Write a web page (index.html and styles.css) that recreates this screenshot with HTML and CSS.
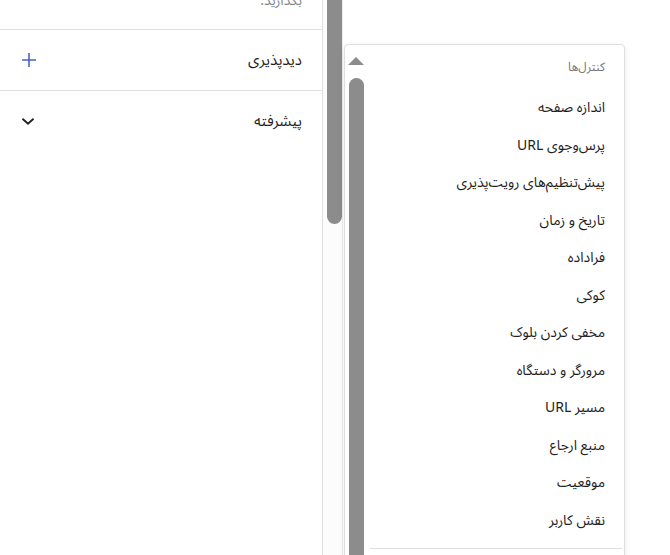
FILE: index.html
```html
<!DOCTYPE html>
<html lang="fa">
<head>
<meta charset="utf-8">
<title>Settings</title>
<link rel="stylesheet" href="styles.css">
</head>
<body>
<div class="page">
  <aside class="panel">
    <div class="intro"><p class="intro-text">بگذارید.</p></div>
    <div class="row">
      <span class="row-title">دیدپذیری</span>
      <svg class="icon" width="16" height="16" viewBox="0 0 16 16"><path d="M8 1v14M1 8h14" stroke="#4563c9" stroke-width="1.6" fill="none"/></svg>
    </div>
    <div class="row no-border">
      <span class="row-title">پیشرفته</span>
      <svg class="icon" width="14" height="9" viewBox="0 0 14 9"><path d="M1.5 1.8L7 6.8l5.5-5" stroke="#222" stroke-width="1.9" fill="none"/></svg>
    </div>
  </aside>
  <div class="track"><div class="track-thumb"></div></div>
</div>

<div class="menu">
  <div class="menu-sb">
    <div class="sb-arrow"></div>
    <div class="sb-thumb"></div>
  </div>
  <div class="menu-body">
    <div class="menu-header">کنترل‌ها</div>
    <ul class="menu-list">
      <li class="menu-item">اندازه صفحه</li>
      <li class="menu-item">پرس‌وجوی URL</li>
      <li class="menu-item">پیش‌تنظیم‌های رویت‌پذیری</li>
      <li class="menu-item">تاریخ و زمان</li>
      <li class="menu-item">فراداده</li>
      <li class="menu-item">کوکی</li>
      <li class="menu-item">مخفی کردن بلوک</li>
      <li class="menu-item">مرورگر و دستگاه</li>
      <li class="menu-item">مسیر URL</li>
      <li class="menu-item">منبع ارجاع</li>
      <li class="menu-item">موقعیت</li>
      <li class="menu-item">نقش کاربر</li>
    </ul>
    <div class="menu-sep"></div>
  </div>
</div>
</body>
</html>
```

FILE: styles.css
```css
html, body {
  margin: 0;
  padding: 0;
  height: 555px;
  overflow: hidden;
  background: #fff;
}
body {
  font-family: "Noto Sans Arabic", "Noto Sans", "DejaVu Sans", sans-serif;
  color: #1e1e1e;
}
.page {
  display: flex;
  height: 555px;
}
.panel {
  width: 323px;
  box-sizing: border-box;
  border-right: 1px solid #e0e0e0;
  direction: rtl;
}
.intro {
  height: 29px;
  border-bottom: 1px solid #e0e0e0;
  overflow: hidden;
  padding-right: 20px;
}
.intro-text {
  margin: -9px 0 0;
  font-size: 14px;
  line-height: 20px;
  color: #8a8a8a;
}
.row {
  height: 60px;
  border-bottom: 1px solid #e0e0e0;
  display: flex;
  align-items: center;
  justify-content: space-between;
  padding: 0 20px 0 21px;
}
.row.no-border { border-bottom: none; }
.row-title {
  font-size: 15px;
  color: #1e1e1e;
}
.icon { display: block; }
.track {
  width: 20px;
  box-sizing: border-box;
  padding-left: 4px;
  border-right: 1px solid #ececec;
  background: #fcfcfc;
}
.track-thumb {
  width: 15px;
  height: 224px;
  background: #8c8c8c;
  border-radius: 0 0 8px 8px;
}
.menu {
  position: absolute;
  left: 344px;
  top: 44px;
  width: 281px;
  height: 560px;
  box-sizing: border-box;
  border: 1px solid #dedede;
  border-radius: 4px;
  background: #fff;
  box-shadow: 0 2px 6px rgba(0,0,0,0.08);
  display: flex;
}
.menu-sb {
  width: 23px;
  flex: none;
  padding-top: 12px;
}
.sb-arrow {
  width: 0;
  height: 0;
  margin-left: 3px;
  border-left: 8.5px solid transparent;
  border-right: 8.5px solid transparent;
  border-bottom: 8px solid #8c8c8c;
}
.sb-thumb {
  margin: 13px 0 0 4px;
  width: 15px;
  height: 600px;
  background: #8c8c8c;
  border-radius: 8px 8px 0 0;
}
.menu-body {
  flex: 1;
  direction: rtl;
}
.menu-header {
  padding: 12px 19px 10px 0;
  font-size: 12px;
  line-height: 22px;
  color: #757575;
}
.menu-list {
  list-style: none;
  margin: 0;
  padding: 0;
}
.menu-item {
  padding-right: 19px;
  font-size: 14px;
  line-height: 37.5px;
  color: #1e1e1e;
}
.menu-sep {
  margin: 9px 2px 0 2px;
  border-top: 1px solid #dedede;
}
```
